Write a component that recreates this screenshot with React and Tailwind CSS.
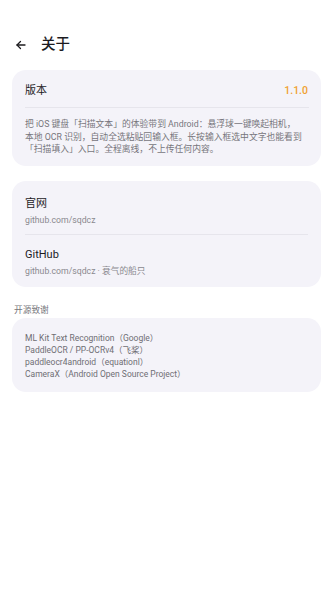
import React from "react";

const CREDITS = [
  "ML Kit Text Recognition（Google）",
  "PaddleOCR / PP-OCRv4（飞桨）",
  "paddleocr4android（equationl）",
  "CameraX（Android Open Source Project）",
];

const FONT = { fontFamily: 'Roboto, "Noto Sans CJK SC", sans-serif' };

export default function App() {
  return (
    <div className="w-[333px] h-[594px] overflow-hidden bg-white text-[#1c1b1f] pt-[35px]" style={FONT}>
      {/* top bar */}
      <div className="flex items-center h-[20px] px-[15px]">
        <svg width="12" height="12" viewBox="0 0 24 24" fill="none" stroke="#1c1b1f" strokeWidth="2.6" strokeLinecap="round" strokeLinejoin="round">
          <path d="M20 12H4" />
          <path d="M11 5l-7 7 7 7" />
        </svg>
        <span className="ml-[14px] text-[14.5px] leading-none font-medium">关于</span>
      </div>

      {/* version */}
      <div className="mx-[12px] mt-[15px] rounded-[14px] bg-[#f4f3f9] pl-[13px] pr-[12px] pt-[11px] pb-[10px]">
        <div className="flex items-center justify-between h-[20px]">
          <span className="text-[11px]">版本</span>
          <span className="text-[10.5px] font-medium text-[#f0a030] mr-[1px]">1.1.0</span>
        </div>
        <div className="h-px bg-[#e6e5ec] mt-[6px]" />
        <p className="mt-[10px] text-[8.8px] leading-[12.5px] text-[#77767c]">
          把 iOS 键盘「扫描文本」的体验带到 Android：悬浮球一键唤起相机，
          <br />
          本地 OCR 识别，自动全选粘贴回输入框。长按输入框选中文字也能看到「扫描填入」入口。全程离线，不上传任何内容。
        </p>
      </div>

      {/* links */}
      <div className="mx-[12px] mt-[15px] rounded-[14px] bg-[#f4f3f9] px-[13px]">
        <div className="pt-[14px] pb-[7px]">
          <div className="text-[11px] leading-[17px]">官网</div>
          <div className="text-[8.7px] leading-[14px] text-[#8a898f] mt-[1px]">github.com/sqdcz</div>
        </div>
        <div className="h-px bg-[#e6e5ec]" />
        <div className="pt-[11px] pb-[9px]">
          <div className="text-[11px] leading-[17px]">GitHub</div>
          <div className="text-[8.7px] leading-[14px] text-[#8a898f] mt-[1px]">github.com/sqdcz · 衰气的船只</div>
        </div>
      </div>

      <div className="mx-[14px] mt-[16px] text-[8.7px] leading-[14px] text-[#77767c]">开源致谢</div>

      <div className="mx-[12px] mt-[1px] rounded-[14px] bg-[#f4f3f9] px-[13px] pt-[14px] pb-[11px]">
        {CREDITS.map((c) => (
          <div key={c} className="text-[8.5px] leading-[12.3px] text-[#6f6e74]">
            {c}
          </div>
        ))}
      </div>
    </div>
  );
}
